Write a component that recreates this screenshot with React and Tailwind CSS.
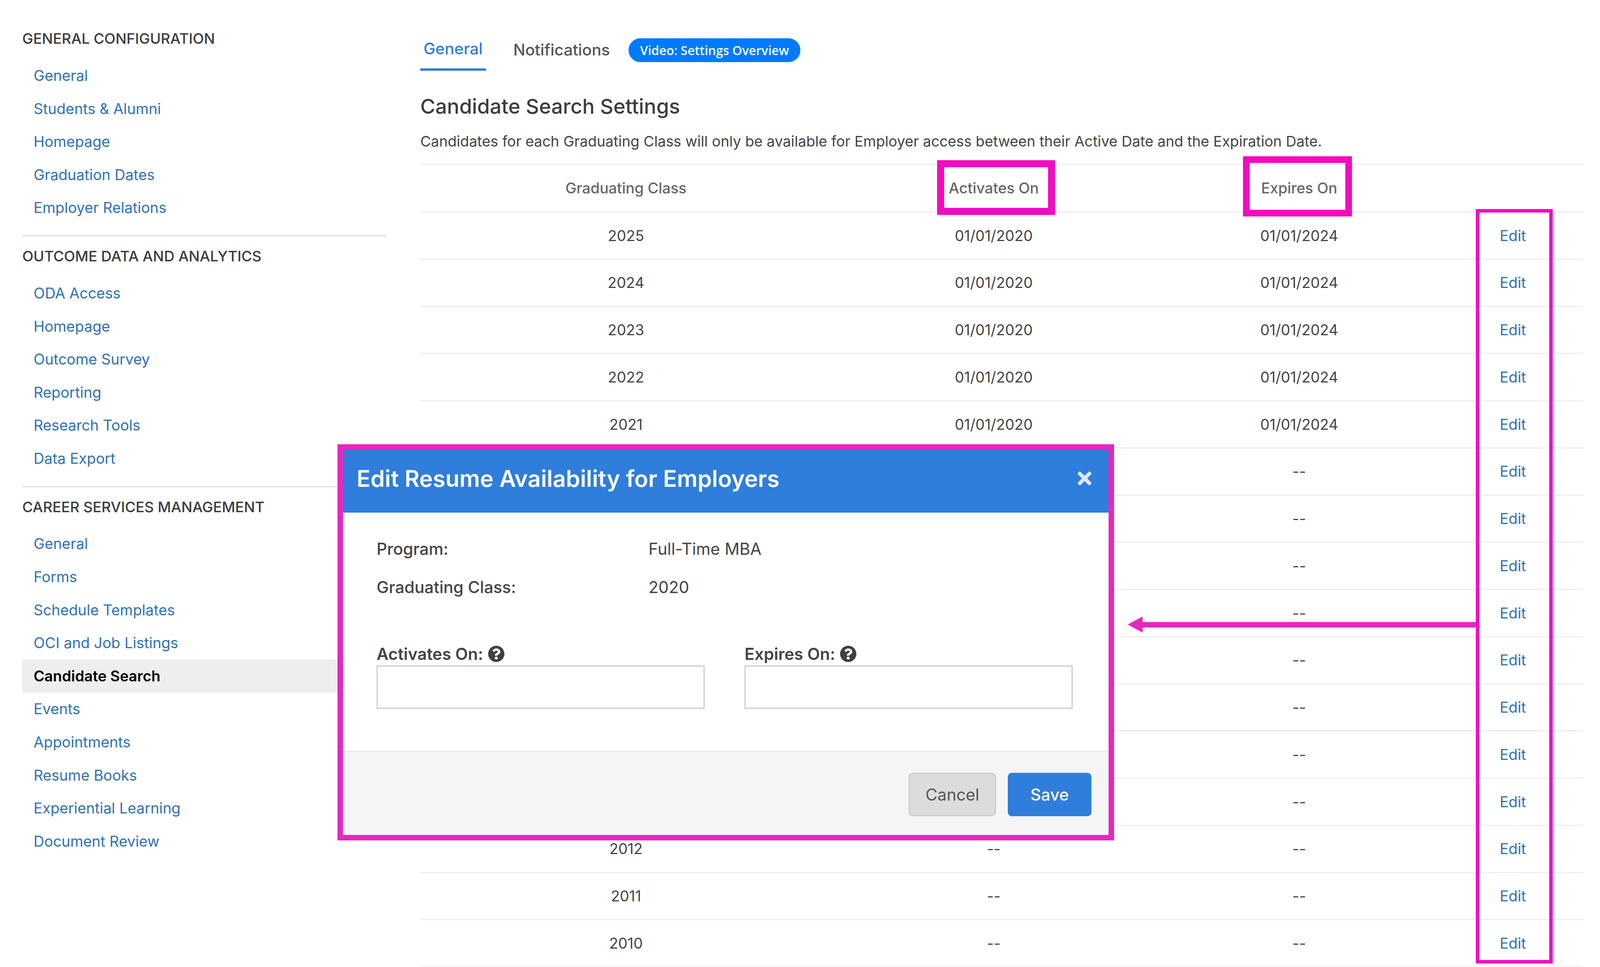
import { FaQuestionCircle, FaTimes } from 'react-icons/fa';

const sections = [
  {
    title: 'GENERAL CONFIGURATION',
    items: ['General', 'Students & Alumni', 'Homepage', 'Graduation Dates', 'Employer Relations'],
  },
  {
    title: 'OUTCOME DATA AND ANALYTICS',
    items: ['ODA Access', 'Homepage', 'Outcome Survey', 'Reporting', 'Research Tools', 'Data Export'],
  },
  {
    title: 'CAREER SERVICES MANAGEMENT',
    items: [
      'General',
      'Forms',
      'Schedule Templates',
      'OCI and Job Listings',
      'Candidate Search',
      'Events',
      'Appointments',
      'Resume Books',
      'Experiential Learning',
      'Document Review',
    ],
  },
];

const rows = [2025, 2024, 2023, 2022, 2021, 2020, 2019, 2018, 2017, 2016, 2015, 2014, 2013, 2012, 2011, 2010].map(
  (year) =>
    year > 2020
      ? { year, activates: '01/01/2020', expires: '01/01/2024' }
      : { year, activates: '--', expires: '--' },
);

const gridCols = 'grid grid-cols-[1053px_830px_734px_1fr] items-center text-center';

function SideNav() {
  return (
    <aside className="w-[932px] shrink-0 pt-[70px]">
      {sections.map((section, i) => (
        <div key={section.title} className={i > 0 ? 'mt-[28px] border-t-[3px] border-[#dedede] pt-[22px]' : ''}>
          <h4 className="flex h-[58px] items-center text-[37.3px] font-medium text-[#3c3c3c]">{section.title}</h4>
          <ul className="mt-[23px] text-[#2f71b6]">
            {section.items.map((item) =>
              item === 'Candidate Search' ? (
                <li key={item} className="flex h-[84.6px] items-center bg-[#eeeeee] pl-[29px] font-semibold text-black">
                  {item}
                </li>
              ) : (
                <li key={item} className="flex h-[84.6px] items-center pl-[29px]">
                  {item}
                </li>
              ),
            )}
          </ul>
        </div>
      ))}
    </aside>
  );
}

function SettingsTable() {
  return (
    <div className="mt-[30px] border-t-[3px] border-[#eeeeee] text-[#444444]">
      <div className={`${gridCols} h-[122px] border-b-[3px] border-[#eeeeee] font-medium text-[#666666]`}>
        <div>Graduating Class</div>
        <div>Activates On</div>
        <div>Expires On</div>
        <div />
      </div>
      {rows.map((row) => {
        // these rows sit behind the modal, their first two cells never show
        const covered = row.year <= 2020 && row.year >= 2013;
        return (
          <div key={row.year} className={`${gridCols} h-[120.75px] border-b-[3px] border-[#eeeeee]`}>
            <div className={covered ? 'invisible' : ''}>{row.year}</div>
            <div className={covered ? 'invisible' : ''}>{row.activates}</div>
            <div>{row.expires}</div>
            <div className="text-[#2f71b6]">Edit</div>
          </div>
        );
      })}
    </div>
  );
}

function DateField({ label }) {
  return (
    <div className="w-[840px]">
      <div className="flex h-[53px] items-center gap-[12px] pb-[6px] font-semibold">
        <span>{label}</span>
        <FaQuestionCircle className="size-[43px] text-[#404040]" />
      </div>
      <div className="h-[111px] border-[3px] border-[#cccccc] bg-white" />
    </div>
  );
}

function EditModal() {
  return (
    <div className="absolute left-[864px] top-[1137px] flex h-[1014px] w-[1988px] flex-col border-[14px] border-[#e528be] bg-white text-[42px] text-[#444444]">
      <div className="flex h-[161px] shrink-0 items-center justify-between bg-[#2f7edb] pb-[14px] pl-[35px] pr-[36px] text-white">
        <h2 className="text-[58.6px] font-semibold">Edit Resume Availability for Employers</h2>
        <FaTimes className="size-[51px] text-[#dde8f7]" />
      </div>
      <div className="h-[610px] shrink-0 px-[86px] pt-[43px]">
        <div className="flex h-[98px] items-center">
          <span className="w-[696px] font-medium">Program:</span>
          <span>Full-Time MBA</span>
        </div>
        <div className="flex h-[98px] items-center">
          <span className="w-[696px] font-medium">Graduating Class:</span>
          <span>2020</span>
        </div>
        <div className="mt-[99px] flex gap-[102px]">
          <DateField label="Activates On:" />
          <DateField label="Expires On:" />
        </div>
      </div>
      <div className="flex flex-1 items-start justify-end gap-[30px] border-t-[3px] border-[#e5e5e5] bg-[#f5f5f5] pr-[44px] pt-[53px]">
        <button
          type="button"
          className="h-[111px] w-[224px] rounded-[10px] border-[3px] border-[#cccccc] bg-[#dcdcdc] text-[#555555]"
        >
          Cancel
        </button>
        <button type="button" className="h-[111px] w-[214px] rounded-[10px] bg-[#2f7edb] font-medium text-white">
          Save
        </button>
      </div>
    </div>
  );
}

export default function App() {
  return (
    <div className="relative flex h-screen w-screen overflow-hidden bg-white pl-[57px] font-['Inter',sans-serif] text-[37.8px] text-[#444444]">
      <SideNav />
      <main className="ml-[87px] w-[2977px] shrink-0">
        <div className="flex items-start pt-[69px]">
          <div className="flex h-[112px] w-[168px] items-center justify-center border-b-[6px] border-[#2f7edb] pt-[6px] text-[40.7px] font-medium text-[#2f7edb]">
            General
          </div>
          <div className="ml-[70px] flex h-[112px] items-center pt-[6px] text-[40.7px] font-medium text-[#555555]">
            Notifications
          </div>
          <div className="ml-[48px] mt-[29px] flex h-[61px] w-[440px] items-center justify-center rounded-full bg-[#007bff] font-['Open_Sans',sans-serif] text-[32px] font-semibold text-white">
            Video: Settings Overview
          </div>
        </div>
        <h1 className="mt-[51px] flex h-[80px] items-center text-[52.5px] font-medium text-[#3c3c3c]">
          Candidate Search Settings
        </h1>
        <p className="mt-[23px] flex h-[54px] items-center text-[37.3px]">
          Candidates for each Graduating Class will only be available for Employer access between their Active Date and
          the Expiration Date.
        </p>
        <SettingsTable />
      </main>

      <EditModal />

      {/* annotation boxes and arrow drawn over the screenshot */}
      <div className="pointer-events-none absolute left-[2399px] top-[410px] h-[140px] w-[302px] border-[18px] border-[#f20cc0]" />
      <div className="pointer-events-none absolute left-[3182px] top-[400px] h-[154px] w-[279px] border-[17px] border-[#f20cc0]" />
      <div className="pointer-events-none absolute left-[3778px] top-[535px] h-[1931px] w-[197px] border-[9px] border-[#ee10c0]" />
      <svg className="absolute left-[2887px] top-[1578px] h-[41px] w-[892px]" viewBox="0 0 892 41">
        <path d="M0 20.5 L38 0 V14 H892 V28 H38 V41 Z" fill="#e528be" />
      </svg>
    </div>
  );
}
